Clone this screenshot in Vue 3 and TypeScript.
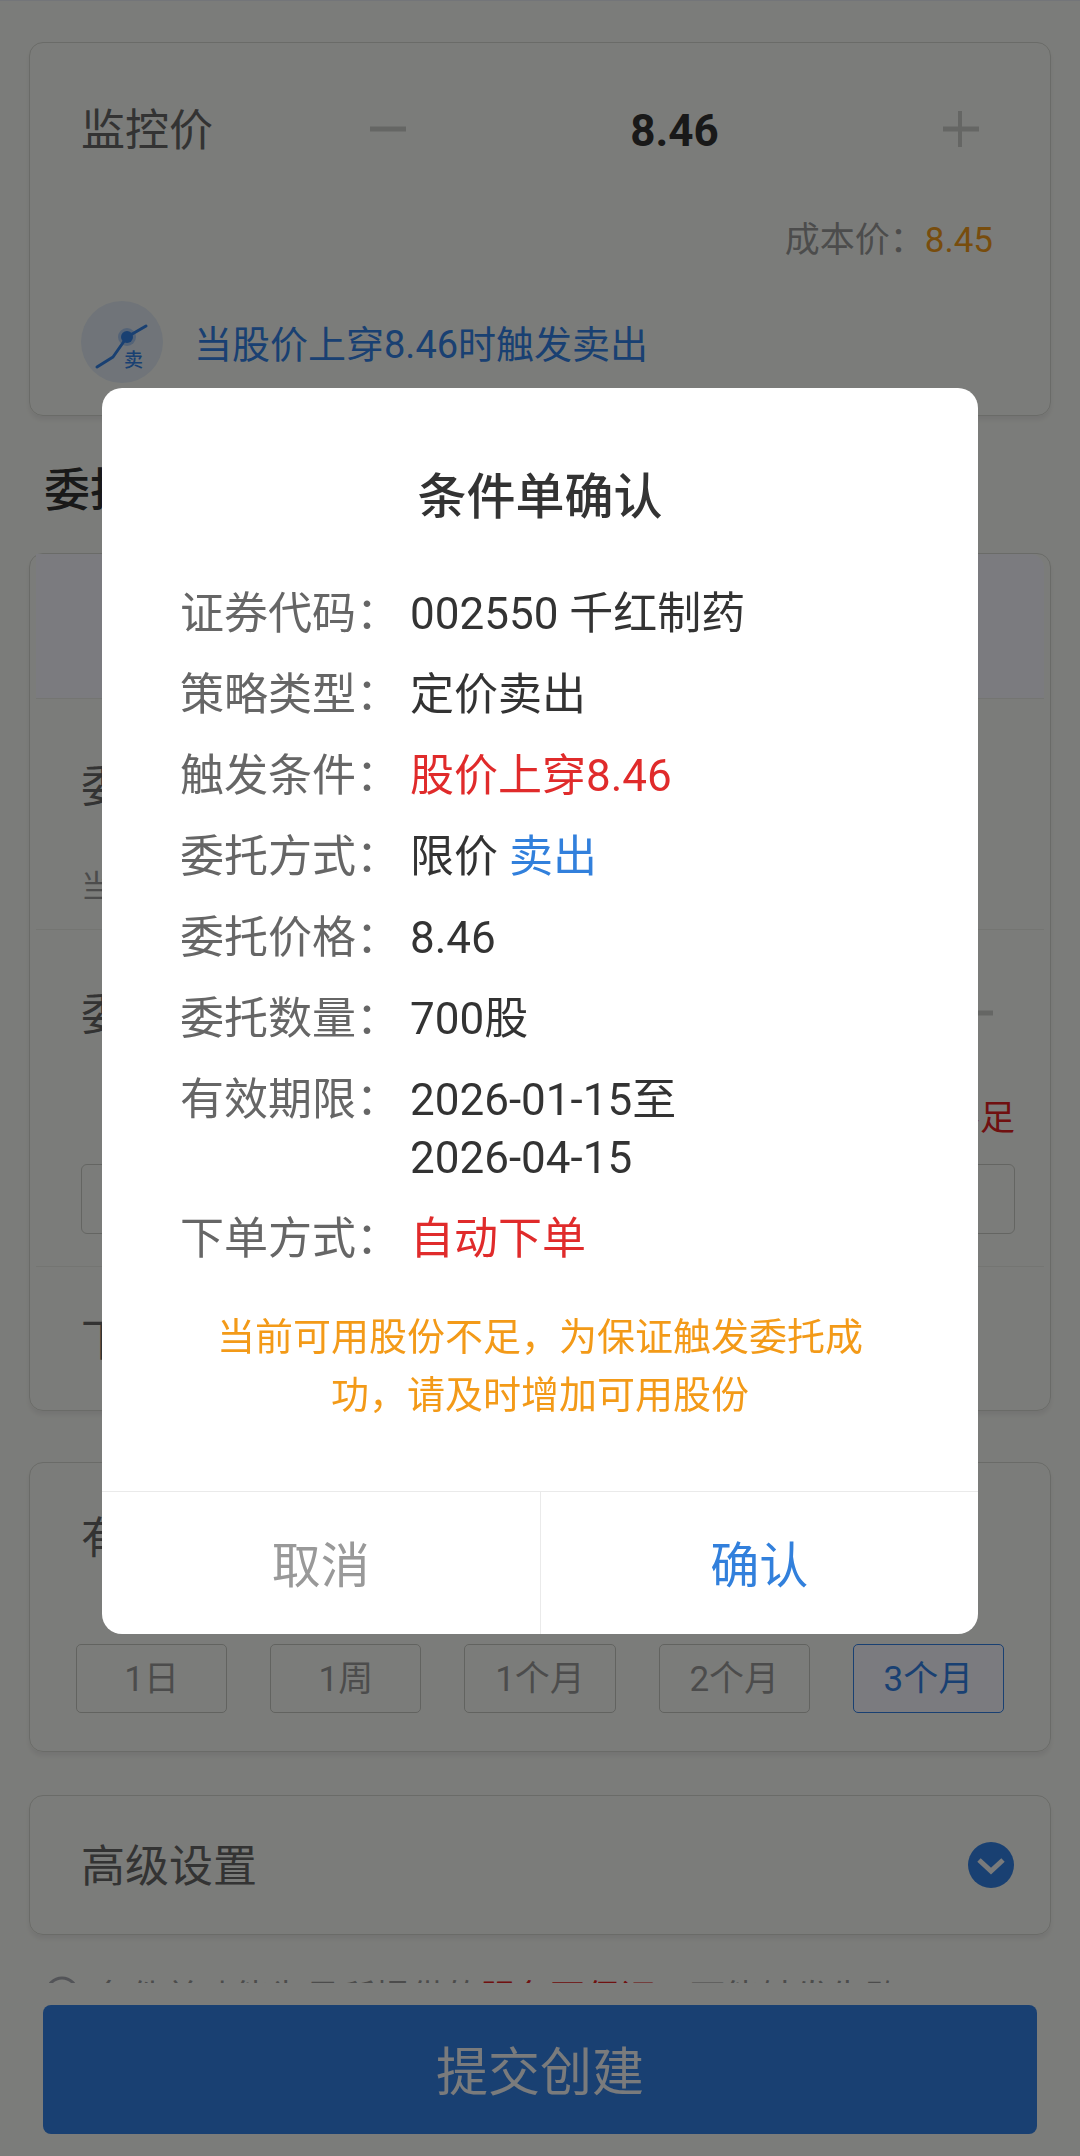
<script setup lang="ts">
import { ref } from 'vue'

interface DetailPart {
  text: string
  tone?: 'red' | 'blue'
}
interface DetailRow {
  label: string
  parts: DetailPart[]
}

const details: DetailRow[] = [
  { label: '证券代码：', parts: [{ text: '002550 千红制药' }] },
  { label: '策略类型：', parts: [{ text: '定价卖出' }] },
  { label: '触发条件：', parts: [{ text: '股价上穿8.46', tone: 'red' }] },
  { label: '委托方式：', parts: [{ text: '限价 ' }, { text: '卖出', tone: 'blue' }] },
  { label: '委托价格：', parts: [{ text: '8.46' }] },
  { label: '委托数量：', parts: [{ text: '700股' }] },
  { label: '有效期限：', parts: [{ text: '2026-01-15至 2026-04-15' }] },
  { label: '下单方式：', parts: [{ text: '自动下单', tone: 'red' }] },
]

const periods: string[] = ['1日', '1周', '1个月', '2个月', '3个月']
const period = ref<string>('3个月')
const price = ref<string>('8.46')
</script>

<template>
  <div class="screen">
    <main class="content">
      <section class="card monitor">
        <div class="field">
          <label class="name" for="price">监控价</label>
          <div class="stepper">
            <button class="step" type="button" aria-label="减少">
              <svg width="36" height="36" viewBox="0 0 36 36"><path d="M0 18H36" /></svg>
            </button>
            <input id="price" v-model="price" class="amount" type="text" />
            <button class="step" type="button" aria-label="增加">
              <svg width="36" height="36" viewBox="0 0 36 36"><path d="M0 18H36" /><path class="thin" d="M17 0V36" /></svg>
            </button>
          </div>
        </div>
        <p class="cost">成本价：<span class="orange">8.45</span></p>
        <div class="trigger">
          <svg class="badge" width="82" height="82" viewBox="0 0 82 82">
            <circle cx="41" cy="41" r="41" fill="#e0e9f2" />
            <circle cx="46" cy="36" r="9" fill="#a9c6ee" />
            <path d="M16 66L32 56L46 36L65 25" fill="none" stroke="#3280e4" stroke-width="3" stroke-linecap="round" stroke-linejoin="round" />
            <circle cx="46" cy="36" r="6" fill="#3280e4" />
            <text x="43" y="66" font-size="19" font-weight="500" fill="#3280e4">卖</text>
          </svg>
          <span class="trigger-text">当股价上穿8.46时触发卖出</span>
        </div>
      </section>

      <h2 class="heading">委托设置</h2>

      <section class="card order">
        <div class="tab"></div>
        <div class="block price-block">
          <div class="field">
            <span class="name">委托价格</span>
            <div class="stepper">
              <span class="step"></span>
              <span class="amount"></span>
              <button class="step" type="button" aria-label="增加价格">
                <svg width="36" height="36" viewBox="0 0 36 36"><path d="M0 18H36" /></svg>
              </button>
            </div>
          </div>
          <p class="hint">当前</p>
        </div>
        <div class="block count-block">
          <div class="field">
            <span class="name">委托数量</span>
            <div class="stepper">
              <span class="step"></span>
              <span class="amount"></span>
              <button class="step" type="button" aria-label="增加数量">
                <svg width="36" height="36" viewBox="0 0 36 36"><path d="M0 18H36" /></svg>
              </button>
            </div>
          </div>
          <p class="lack">不足</p>
          <div class="box"></div>
        </div>
        <div class="block mode-block">
          <span class="name">下单方式</span>
        </div>
      </section>

      <section class="card validity">
        <span class="name">有效期限</span>
        <div class="chips">
          <button
            v-for="p in periods"
            :key="p"
            type="button"
            class="chip"
            :class="{ active: p === period }"
            @click="period = p"
          >{{ p }}</button>
        </div>
      </section>

      <section class="card advanced">
        <span class="name">高级设置</span>
        <button class="toggle" type="button" aria-label="展开">
          <svg width="46" height="46" viewBox="0 0 46 46">
            <circle cx="23" cy="23" r="23" fill="#3280e4" />
            <path d="M11 18L23 29L35 18" fill="none" stroke="#f2f4f6" stroke-width="5" />
          </svg>
        </button>
      </section>

      <p class="notice">
        <svg width="34" height="34" viewBox="0 0 34 34"><circle cx="17" cy="17" r="15" fill="none" stroke="#a6a8b0" stroke-width="3" /></svg>
        <span class="notice-text">条件单功能为易所提供的<em>服务不保证</em>，可能触发失败</span>
      </p>
    </main>

    <footer class="bar">
      <button class="submit" type="button">提交创建</button>
    </footer>

    <div class="mask">
      <div class="dialog" role="dialog" aria-modal="true" aria-labelledby="dialog-title">
        <h1 id="dialog-title" class="title">条件单确认</h1>
        <dl class="details">
          <div v-for="row in details" :key="row.label" class="row">
            <dt>{{ row.label }}</dt>
            <dd><span v-for="part in row.parts" :key="part.text" :class="part.tone">{{ part.text }}</span></dd>
          </div>
        </dl>
        <p class="warning">当前可用股份不足，为保证触发委托成功，请及时增加可用股份</p>
        <div class="actions">
          <button class="cancel" type="button">取消</button>
          <button class="confirm" type="button">确认</button>
        </div>
      </div>
    </div>
  </div>
</template>

<style>
body {
  margin: 0;
}
</style>

<style scoped>
.screen {
  height: 100vh;
  display: flex;
  flex-direction: column;
  box-sizing: border-box;
  background: #f7f9f4;
  color: #333;
  font-family: Roboto, "Noto Sans CJK SC", sans-serif;
  font-size: 44px;
  line-height: 58px;
}
.screen * {
  box-sizing: border-box;
}
p, h1, h2, dl, dd {
  margin: 0;
}
button, input {
  margin: 0;
  padding: 0;
  border: 0;
  background: none;
  font: inherit;
  color: inherit;
}
.content {
  flex: 1;
  min-height: 0;
  overflow: hidden;
  padding: 41px 29px 0;
  border-top: 1px solid #e6eaf2;
}
.card {
  border: 1px solid #d4d6d0;
  border-radius: 14px;
  box-shadow: 0 4px 4px rgba(60, 40, 80, 0.08);
}
.name {
  padding-top: 4px;
  color: #666;
}
.field {
  display: flex;
  align-items: center;
  justify-content: space-between;
}
.stepper {
  display: flex;
  align-items: center;
  width: 653px;
  height: 114px;
}
.step {
  flex: none;
  display: flex;
  align-items: center;
  justify-content: center;
  width: 80px;
  height: 100%;
}
.step path {
  stroke: #cbccc8;
  stroke-width: 5;
}
.step .thin {
  stroke-width: 4;
}
.amount {
  flex: 1;
  min-width: 0;
  padding-top: 4px;
  text-align: center;
  font-weight: 700;
}
.monitor {
  height: 374px;
  padding: 29px 49px 0 51px;
}
.cost {
  margin-top: 26px;
  padding-right: 8px;
  text-align: right;
  font-size: 35px;
  line-height: 58px;
  color: #999;
}
.orange {
  color: #f09a1a;
}
.trigger {
  display: flex;
  align-items: center;
  gap: 31px;
  margin-top: 31px;
  font-size: 38px;
  color: #3280e4;
}
.trigger-text {
  padding-top: 6px;
}
.heading {
  margin: 44px 0 33px;
  padding-left: 15px;
  font-size: 46px;
  line-height: 60px;
  font-weight: 500;
}
.tab {
  height: 144px;
  margin: 0 6px;
  border-radius: 0 14px 0 0;
  background: #f6f6ff;
}
.block {
  margin: 0 6px;
  padding: 0 45px;
  border-top: 1px solid #e8eae4;
}
.price-block {
  height: 231px;
  padding-top: 29px;
}
.hint {
  margin-top: 16px;
  font-size: 31px;
  color: #999;
}
.count-block {
  height: 337px;
  padding-top: 26px;
  padding-right: 29px;
}
.count-block .stepper {
  width: 640px;
}
.lack {
  margin-top: 20px;
  text-align: right;
  font-size: 35px;
  color: #e02020;
}
.box {
  height: 70px;
  margin-top: 16px;
  border: 1px solid #c8cac5;
  border-radius: 6px;
}
.mode-block {
  display: flex;
  align-items: center;
  height: 144px;
}
.validity {
  margin-top: 51px;
  height: 290px;
  padding: 43px 46px 0;
}
.validity .name {
  display: block;
  padding-left: 5px;
}
.chips {
  display: flex;
  gap: 43px;
  margin-top: 76px;
}
.chip {
  flex: 1;
  height: 69px;
  padding-top: 2px;
  border: 1px solid #c4c6c1;
  border-radius: 5px;
  font-size: 35px;
  line-height: 58px;
  color: #999;
}
.chip.active {
  border-color: #3280e4;
  background: #f6f6ff;
  color: #3280e4;
}
.advanced {
  display: flex;
  align-items: center;
  justify-content: space-between;
  height: 140px;
  margin-top: 43px;
  padding: 0 36px 0 51px;
}
.toggle {
  display: flex;
}
.notice {
  display: flex;
  align-items: flex-start;
  gap: 16px;
  margin-top: 41px;
  padding-left: 16px;
  font-size: 35px;
  line-height: 40px;
  color: #999;
  white-space: nowrap;
}
.notice-text {
  padding-top: 3px;
}
.notice em {
  font-style: normal;
  color: #e02020;
}
.bar {
  flex: none;
  padding: 0 43px 22px;
  border-top: 22px solid transparent;
}
.submit {
  display: block;
  width: 100%;
  height: 129px;
  padding-top: 8px;
  border-radius: 8px;
  background: #3280e4;
  color: #f4f6f8;
  font-size: 52px;
}
.mask {
  position: fixed;
  inset: 0;
  padding: 18vh 102px 0;
  background: rgba(0, 0, 0, 0.5);
}
.dialog {
  overflow: hidden;
  border-radius: 20px;
  background: #fff;
}
.title {
  padding-top: 80px;
  text-align: center;
  font-size: 49px;
  line-height: 60px;
  font-weight: 500;
}
.details {
  display: flex;
  flex-direction: column;
  gap: 23px;
  margin-top: 57px;
  padding: 0 78px;
}
.row {
  display: flex;
}
dt {
  flex: none;
  width: 230px;
  color: #666;
}
dd {
  width: 300px;
  flex: none;
  white-space: pre-wrap;
}
.row:first-child dd {
  width: auto;
}
.red {
  color: #e02b2b;
}
.blue {
  color: #3280dc;
}
.warning {
  margin-top: 40px;
  padding: 0 110px;
  text-align: center;
  font-size: 38px;
  color: #f39a18;
}
.actions {
  display: flex;
  height: 143px;
  margin-top: 67px;
  border-top: 1px solid #eaeaea;
}
.actions button {
  flex: 1;
  padding-top: 8px;
  font-size: 49px;
}
.actions .cancel {
  border-right: 1px solid #eaeaea;
  color: #999;
}
.actions .confirm {
  color: #3280dc;
}
</style>
